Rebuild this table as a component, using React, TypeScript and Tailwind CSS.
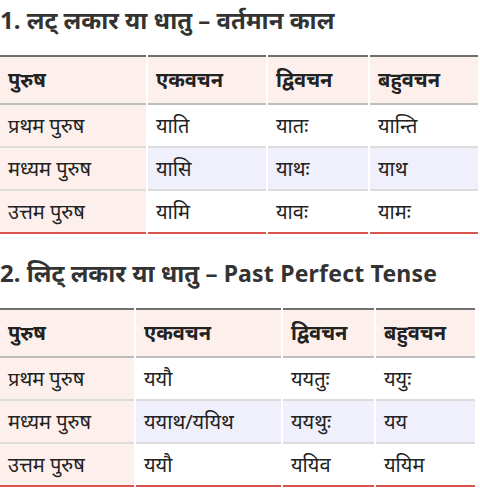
import React from "react";

type Table = {
  title: string;
  en?: string;
  widths: string[];
  rows: string[][];
};

const head = ["पुरुष", "एकवचन", "द्विवचन", "बहुवचन"];

const tables: Table[] = [
  {
    title: "1. लट् लकार या धातु – वर्तमान काल",
    widths: ["w-[146px]", "w-[118px]", "w-[100px]", "w-[108px]"],
    rows: [
      ["प्रथम पुरुष", "याति", "यातः", "यान्ति"],
      ["मध्यम पुरुष", "यासि", "याथः", "याथ"],
      ["उत्तम पुरुष", "यामि", "यावः", "यामः"],
    ],
  },
  {
    title: "2. लिट् लकार या धातु – ",
    en: "Past Perfect Tense",
    widths: ["w-[134px]", "w-[145px]", "w-[91px]", "w-[99px]"],
    rows: [
      ["प्रथम पुरुष", "ययौ", "ययतुः", "ययुः"],
      ["मध्यम पुरुष", "ययाथ/ययिथ", "ययथुः", "यय"],
      ["उत्तम पुरुष", "ययौ", "ययिव", "ययिम"],
    ],
  },
];

export default function App() {
  return (
    <div
      className="w-[480px] bg-white pt-[4px] text-[#222]"
      style={{ fontFamily: '"Noto Sans", "Noto Sans Devanagari", sans-serif' }}
    >
      {tables.map((t, ti) => (
        <div key={ti} className={ti === 0 ? "" : "mt-[23px]"}>
          <h2 className="text-[24px] font-bold leading-[32px] text-[#333] mb-[19px] whitespace-nowrap">
            {t.title}
            {t.en && <span className="text-[23px] tracking-[0.2px]">{t.en}</span>}
          </h2>
          <table className="w-[477px] table-fixed border-separate border-spacing-x-[2px] border-spacing-y-0 -ml-[2px]">
            <thead>
              <tr>
                {head.map((h, i) => (
                  <th
                    key={i}
                    className={`${t.widths[i]} h-[50px] bg-[#fdf0ec] border-t-[2px] border-b-[2px] border-t-[#707070] border-b-[#bdbdbd] text-left pl-[8px] text-[20px] font-bold`}
                  >
                    {h}
                  </th>
                ))}
              </tr>
            </thead>
            <tbody>
              {t.rows.map((r, ri) => (
                <tr key={ri}>
                  {r.map((c, ci) => (
                    <td
                      key={ci}
                      className={`h-[43px] pl-[8px] text-[20px] border-b-[2px] ${
                        ri === 2 ? "border-b-[#d9534f]" : "border-b-[#dcdcdc]"
                      } ${
                        ci === 0 ? "bg-[#fdf0ec]" : ri === 1 ? "bg-[#eff0fb]" : "bg-white"
                      }`}
                    >
                      {c}
                    </td>
                  ))}
                </tr>
              ))}
            </tbody>
          </table>
        </div>
      ))}
    </div>
  );
}
